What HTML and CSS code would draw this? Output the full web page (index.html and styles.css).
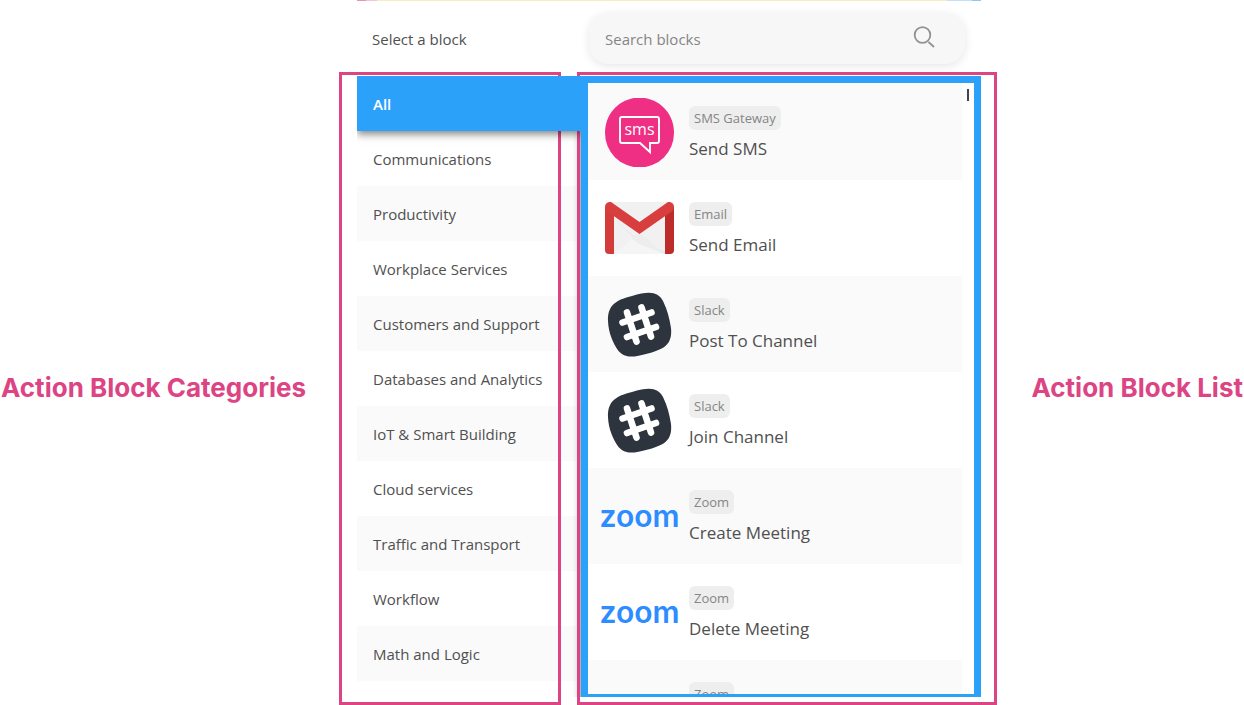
FILE: index.html
```html
<!DOCTYPE html>
<html lang="en">
<head>
<meta charset="utf-8">
<meta name="viewport" content="width=device-width, initial-scale=1">
<title>Select a block</title>
<link rel="stylesheet" href="styles.css">
</head>
<body>
<svg class="sprite" aria-hidden="true">
  <symbol id="slack" viewBox="15 9 69 69">
    <path fill="#2d343d" d="M18 40C17.500 24 26 19 42 15C60 9.500 68 11 73 20C77.500 29 79.500 38 81 47C82.500 63 75 68 58 72.500C42 77 35 77 28.500 70C23 62 18.500 52 18 40Z"/>
    <path fill="none" stroke="#fff" stroke-width="6.600" stroke-linecap="round" d="M37 31.500L46.500 60.500M51.500 26.500L61 55.500M32.500 41.500L61.500 31.500M37 56L66 46"/>
  </symbol>
</svg>
<main class="page">
  <h2 class="note note-left">Action Block Categories</h2>
  <section class="picker">
    <div class="strip"></div>
    <header class="top">
      <h1 class="heading">Select a block</h1>
      <form class="search">
        <input class="search-input" type="text" placeholder="Search blocks" aria-label="Search blocks">
        <button class="search-button" type="button" aria-label="Search">
          <svg width="22" height="22" viewBox="0 0 22 22" fill="none" stroke="#929292" stroke-width="1.800"><circle cx="9.500" cy="9" r="7.800"/><path d="M15.500 16l5.500 5"/></svg>
        </button>
      </form>
    </header>
    <div class="body">
      <nav class="categories" aria-label="Action block categories">
        <button class="category active">All</button>
        <button class="category">Communications</button>
        <button class="category">Productivity</button>
        <button class="category">Workplace Services</button>
        <button class="category">Customers and Support</button>
        <button class="category">Databases and Analytics</button>
        <button class="category">IoT &amp; Smart Building</button>
        <button class="category">Cloud services</button>
        <button class="category">Traffic and Transport</button>
        <button class="category">Workflow</button>
        <button class="category">Math and Logic</button>
        <button class="category" aria-label="More"></button>
      </nav>
      <div class="panel">
        <ul class="blocks">
          <li class="block">
            <svg class="icon" viewBox="0 0 69 69"><path fill="#ee2f84" d="M29 0h11C57 3 69 17 69 35A34.500 34.500 0 0 1 0 35C0 17 12 3 29 0z"/><path fill="none" stroke="#fff" stroke-width="1.900" stroke-linejoin="miter" d="M17 19h35q2 0 2 2v22q0 2-2 2h-7v9l-10-9H17q-2 0-2-2V21q0-2 2-2z"/><text class="sms" x="34.500" y="37" text-anchor="middle">sms</text></svg>
            <div class="info"><span class="tag">SMS Gateway</span><span class="name">Send SMS</span></div>
          </li>
          <li class="block">
            <svg class="icon" viewBox="0 0 69 69"><g transform="translate(0 8)"><path fill="#f1f1f1" d="M4 0h61v52H4z"/><path fill="#e4e4e4" d="M9 17l23 21 33 14H50L9 17z"/><path fill="#ededed" d="M27 36l7.500-5L60 52H42z"/><path fill="#f5f5f5" d="M9 52l18-15 7 5 26 10z"/><path fill="#d43b3b" d="M0 5h9v47H4q-4 0-4-4z"/><path fill="#bd2b2b" d="M60 5h9v43q0 4-4 4h-5z"/><path fill="#d93e3e" d="M4 0h2l28.500 20L63 0h2q4 1 4 5 0 3-3 5L34.500 32 3 10Q0 8 0 5q0-4 4-5z"/></g></svg>
            <div class="info"><span class="tag">Email</span><span class="name">Send Email</span></div>
          </li>
          <li class="block">
            <svg class="icon"><use href="#slack"/></svg>
            <div class="info"><span class="tag">Slack</span><span class="name">Post To Channel</span></div>
          </li>
          <li class="block">
            <svg class="icon"><use href="#slack"/></svg>
            <div class="info"><span class="tag">Slack</span><span class="name">Join Channel</span></div>
          </li>
          <li class="block">
            <span class="icon wordmark">zoom</span>
            <div class="info"><span class="tag">Zoom</span><span class="name">Create Meeting</span></div>
          </li>
          <li class="block">
            <span class="icon wordmark">zoom</span>
            <div class="info"><span class="tag">Zoom</span><span class="name">Delete Meeting</span></div>
          </li>
          <li class="block">
            <span class="icon"></span>
            <div class="info"><span class="tag">Zoom</span></div>
          </li>
        </ul>
        <div class="track"><div class="thumb"></div></div>
      </div>
    </div>
    <div class="frame frame-categories"></div>
    <div class="frame frame-list"></div>
  </section>
  <h2 class="note note-right">Action Block List</h2>
</main>
</body>
</html>
```
FILE: styles.css
```css
* { box-sizing: border-box; }
body { margin: 0; background: #fff; color: #505050; font-family: "Open Sans", "Noto Sans", sans-serif; }
button, input { font: inherit; color: inherit; border: 0; background: none; }
.sprite { display: none; }
.page { display: grid; grid-template-columns: 357fr 624fr 263fr; height: 100vh; overflow: hidden; }
.note { margin: 0; padding-top: 70px; align-self: center; color: #dc4484; font: 700 26px/32px Inter, sans-serif; white-space: nowrap; }
.note-left { padding-left: 1px; }
.note-right { padding-right: 1px; text-align: right; }
.picker { position: relative; display: flex; flex-direction: column; min-width: 0; min-height: 0; padding-bottom: 8px; }
.strip { height: 1px; flex: none; background: linear-gradient(90deg, #f08fbb 0 9px, #f3c4d9 9px 20px, #f7edc4 20px calc(100% - 34px), #c4e0f6 calc(100% - 34px) calc(100% - 9px), #8cc8f5 calc(100% - 9px)); }
.top { display: grid; grid-template-columns: 232px 1fr; align-items: center; flex: none; height: 75px; padding-right: 16px; }
.heading { margin: 0; padding-left: 15px; font-size: 15px; font-weight: 400; line-height: 20px; }
.search { display: flex; align-items: center; height: 51px; padding: 0 30px 0 16px; border-radius: 20px; background: #f7f7f7; box-shadow: 0 2px 10px rgba(0, 0, 0, .1); }
.search-input { flex: 1; min-width: 0; padding: 0; font-size: 15px; outline: 0; }
.search-input::placeholder { color: #858585; opacity: 1; }
.search-button { display: flex; padding: 0 0 4px; }
.body { display: grid; grid-template-columns: 224px 1fr; flex: 1; min-height: 0; }
.categories { display: flex; flex-direction: column; min-height: 0; overflow: hidden; }
.category { flex: none; height: 55px; padding: 0 16px; text-align: left; font-size: 15px; line-height: 20px; background: linear-gradient(270deg, rgba(0, 0, 0, .32), rgba(0, 0, 0, .06) 5px, transparent 9px), #fff; }
.category:nth-child(odd) { background: linear-gradient(270deg, rgba(0, 0, 0, .32), rgba(0, 0, 0, .06) 5px, transparent 9px), #fafafa; }
.category.active { z-index: 1; background: #2ba1f9; color: #fff; font-weight: 600; box-shadow: 0 3px 8px rgba(0, 0, 0, .5); }
.panel { display: flex; min-width: 0; min-height: 0; border: 7px solid #2ba1f9; border-bottom-width: 3px; background: #fff; overflow: hidden; }
.blocks { flex: 1; min-width: 0; margin: 0; padding: 1px 0 0; list-style: none; }
.block { display: flex; gap: 15px; height: 96px; padding: 14px 17px 0; background: #fff; }
.block:nth-child(odd) { background: #fafafa; }
.icon { flex: none; width: 69px; height: 69px; }
.sms { font: 16px "Open Sans", sans-serif; fill: #fff; }
.wordmark { display: flex; align-items: center; justify-content: center; color: #2d8cff; font: 600 30px/32px Inter, sans-serif; padding-bottom: 2px; }
.info { display: flex; flex-direction: column; align-items: flex-start; gap: 7px; padding-top: 8px; }
.tag { height: 24px; padding: 0 5px; border-radius: 6px; background: #eee; color: #858585; font-size: 13px; line-height: 24px; }
.name { font-size: 17px; line-height: 24px; }
.track { flex: none; width: 12px; padding: 6px 5px; }
.thumb { width: 2px; height: 12px; background: #444; }
.frame { position: absolute; top: 72px; bottom: 0; border: 3px solid #dc4484; pointer-events: none; }
.frame-categories { left: -18px; width: 222px; }
.frame-list { left: 220px; right: -16px; }
```
